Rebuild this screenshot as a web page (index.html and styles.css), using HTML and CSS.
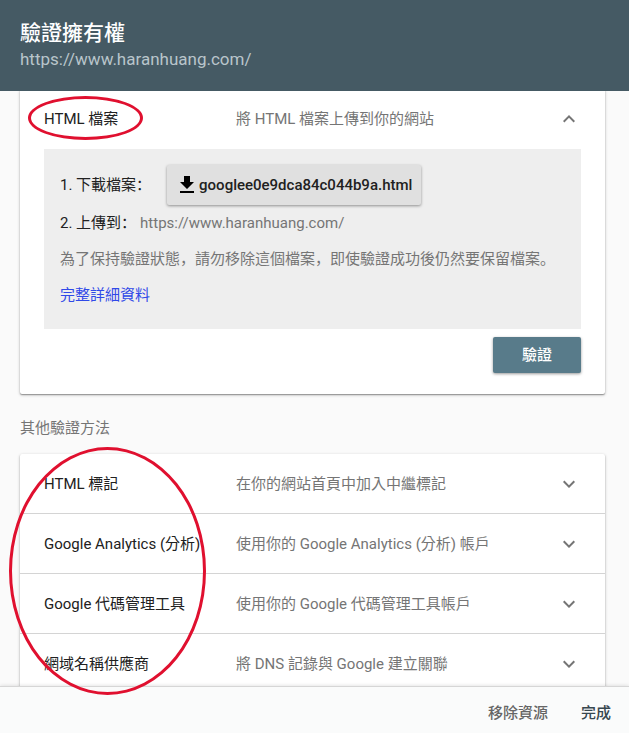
FILE: index.html
```html
<!DOCTYPE html>
<html lang="zh-TW">
<head>
    <meta charset="utf-8">
    <title>驗證擁有權</title>
    <link rel="stylesheet" href="styles.css">
</head>
<body>
    <div class="dialog">
        <header class="header">
            <h1>驗證擁有權</h1>
            <p>https://www.haranhuang.com/</p>
        </header>

        <main class="content">
            <section class="card card-open">
                <button class="row" type="button" aria-expanded="true">
                    <span class="name">HTML 檔案</span>
                    <span class="desc">將 HTML 檔案上傳到你的網站</span>
                    <svg class="chevron" viewBox="0 0 24 24"><path d="M12 8l-6 6 1.41 1.41L12 10.83l4.59 4.58L18 14z"/></svg>
                </button>
                <!-- lang keeps the punctuation at the lower left -->
                <div class="panel" lang="zh-CN">
                    <div class="step step-download">
                        <span>1. 下載檔案：</span>
                        <button class="download" type="button">
                            <svg viewBox="0 0 24 24"><path d="M19 9h-4V3H9v6H5l7 7 7-7zM5 18v2h14v-2H5z"/></svg>
                            googlee0e9dca84c044b9a.html
                        </button>
                    </div>
                    <div class="step">
                        <span>2. 上傳到：</span>
                        <span class="muted">https://www.haranhuang.com/</span>
                    </div>
                    <p class="step muted">為了保持驗證狀態，請勿移除這個檔案，即使驗證成功後仍然要保留檔案。</p>
                    <p class="step"><a href="#">完整詳細資料</a></p>
                </div>
                <div class="actions">
                    <button class="verify" type="button">驗證</button>
                </div>
            </section>

            <h2>其他驗證方法</h2>

            <section class="card">
                <button class="row" type="button">
                    <span class="name">HTML 標記</span>
                    <span class="desc">在你的網站首頁中加入中繼標記</span>
                    <svg class="chevron" viewBox="0 0 24 24"><path d="M16.59 8.59L12 13.17 7.41 8.59 6 10l6 6 6-6z"/></svg>
                </button>
                <button class="row" type="button">
                    <span class="name">Google Analytics (分析)</span>
                    <span class="desc">使用你的 Google Analytics (分析) 帳戶</span>
                    <svg class="chevron" viewBox="0 0 24 24"><path d="M16.59 8.59L12 13.17 7.41 8.59 6 10l6 6 6-6z"/></svg>
                </button>
                <button class="row" type="button">
                    <span class="name">Google 代碼管理工具</span>
                    <span class="desc">使用你的 Google 代碼管理工具帳戶</span>
                    <svg class="chevron" viewBox="0 0 24 24"><path d="M16.59 8.59L12 13.17 7.41 8.59 6 10l6 6 6-6z"/></svg>
                </button>
                <button class="row" type="button">
                    <span class="name">網域名稱供應商</span>
                    <span class="desc">將 DNS 記錄與 Google 建立關聯</span>
                    <svg class="chevron" viewBox="0 0 24 24"><path d="M16.59 8.59L12 13.17 7.41 8.59 6 10l6 6 6-6z"/></svg>
                </button>
            </section>
        </main>

        <footer class="footer">
            <button class="remove" type="button">移除資源</button>
            <button class="done" type="button">完成</button>
        </footer>

        <!-- red pen marks -->
        <div class="mark mark-file"></div>
        <div class="mark mark-others"></div>
    </div>
</body>
</html>
```
FILE: styles.css
```css
* {
    box-sizing: border-box;
}
body {
    margin: 0;
    font-family: Roboto, "Noto Sans CJK TC", sans-serif;
    font-size: 15px;
    line-height: 20px;
    color: #212121;
}
h1, h2, p {
    margin: 0;
    font-weight: normal;
}
button {
    font: inherit;
    color: inherit;
    border: none;
    background: none;
    padding: 0;
    cursor: pointer;
}
a {
    color: #3049e8;
    text-decoration: none;
}
.dialog {
    position: relative;
    display: flex;
    flex-direction: column;
    height: 100vh;
    overflow: hidden;
    background: #fafafa;
}
.header {
    flex: none;
    padding: 20px 20px 19px;
    background: #455a64;
    color: #fff;
}
.header h1 {
    font-size: 21px;
    line-height: 26px;
    font-weight: 500;
}
.header p {
    font-size: 17px;
    line-height: 26px;
    color: #b9c5cb;
}
.content {
    flex: 1;
    min-height: 0;
    overflow: hidden;
    padding: 0 24px 0 20px;
}
.card {
    background: #fff;
    border-radius: 2px;
    box-shadow: 0 1px 3px rgba(0, 0, 0, 0.3), 0 1px 1px rgba(0, 0, 0, 0.25);
}
.card-open {
    margin-top: -2px;
    padding-bottom: 21px;
}
.row {
    display: grid;
    grid-template-columns: 192px 1fr 24px;
    align-items: center;
    width: 100%;
    height: 60px;
    padding: 0 24px;
    text-align: left;
    white-space: nowrap;
}
.row:not(:last-child) {
    border-bottom: 1px solid #d4d4d4;
}
.card-open .row {
    border-bottom: none;
}
.desc, .muted {
    color: #757575;
}
.chevron {
    width: 24px;
    height: 24px;
    fill: #757575;
}
.panel {
    margin: 0 24px;
    padding: 16px;
    background: #eee;
    font-family: Roboto, "Noto Sans CJK SC", sans-serif;
}
.step {
    display: flex;
    align-items: center;
    gap: 4px;
    min-height: 36px;
}
.step-download {
    gap: 16px;
    min-height: 40px;
}
.download {
    display: flex;
    align-items: center;
    height: 40px;
    padding: 0 9px 0 8px;
    border-radius: 2px;
    background: #e0e0e0;
    box-shadow: 0 1px 3px rgba(0, 0, 0, 0.4);
    font-weight: 500;
}
.download svg {
    width: 24px;
    height: 24px;
}
.actions {
    display: flex;
    justify-content: flex-end;
    padding: 8px 24px 0;
}
.verify {
    width: 88px;
    height: 36px;
    border-radius: 2px;
    background: #587b8a;
    box-shadow: 0 1px 3px rgba(0, 0, 0, 0.4);
    color: #fff;
    font-weight: 500;
}
h2 {
    padding: 24px 0 16px;
    font-size: 15px;
    color: #757575;
}
.footer {
    position: relative;
    flex: none;
    display: flex;
    justify-content: flex-end;
    align-items: center;
    gap: 33px;
    height: 47px;
    padding: 5px 18px 0;
    background: #fafbfb;
    border-top: 1px solid #d6d6d6;
    box-shadow: 0 0 4px rgba(0, 0, 0, 0.15);
    font-weight: 500;
}
.remove {
    color: #666;
}
.done {
    color: #37474f;
}
.mark {
    position: absolute;
    border: 3px solid #e0102f;
    border-radius: 50%;
    pointer-events: none;
}
.mark-file {
    left: 28px;
    top: 96px;
    width: 115px;
    height: 44px;
}
.mark-others {
    left: 9px;
    top: 447px;
    width: 197px;
    height: 248px;
}
```
